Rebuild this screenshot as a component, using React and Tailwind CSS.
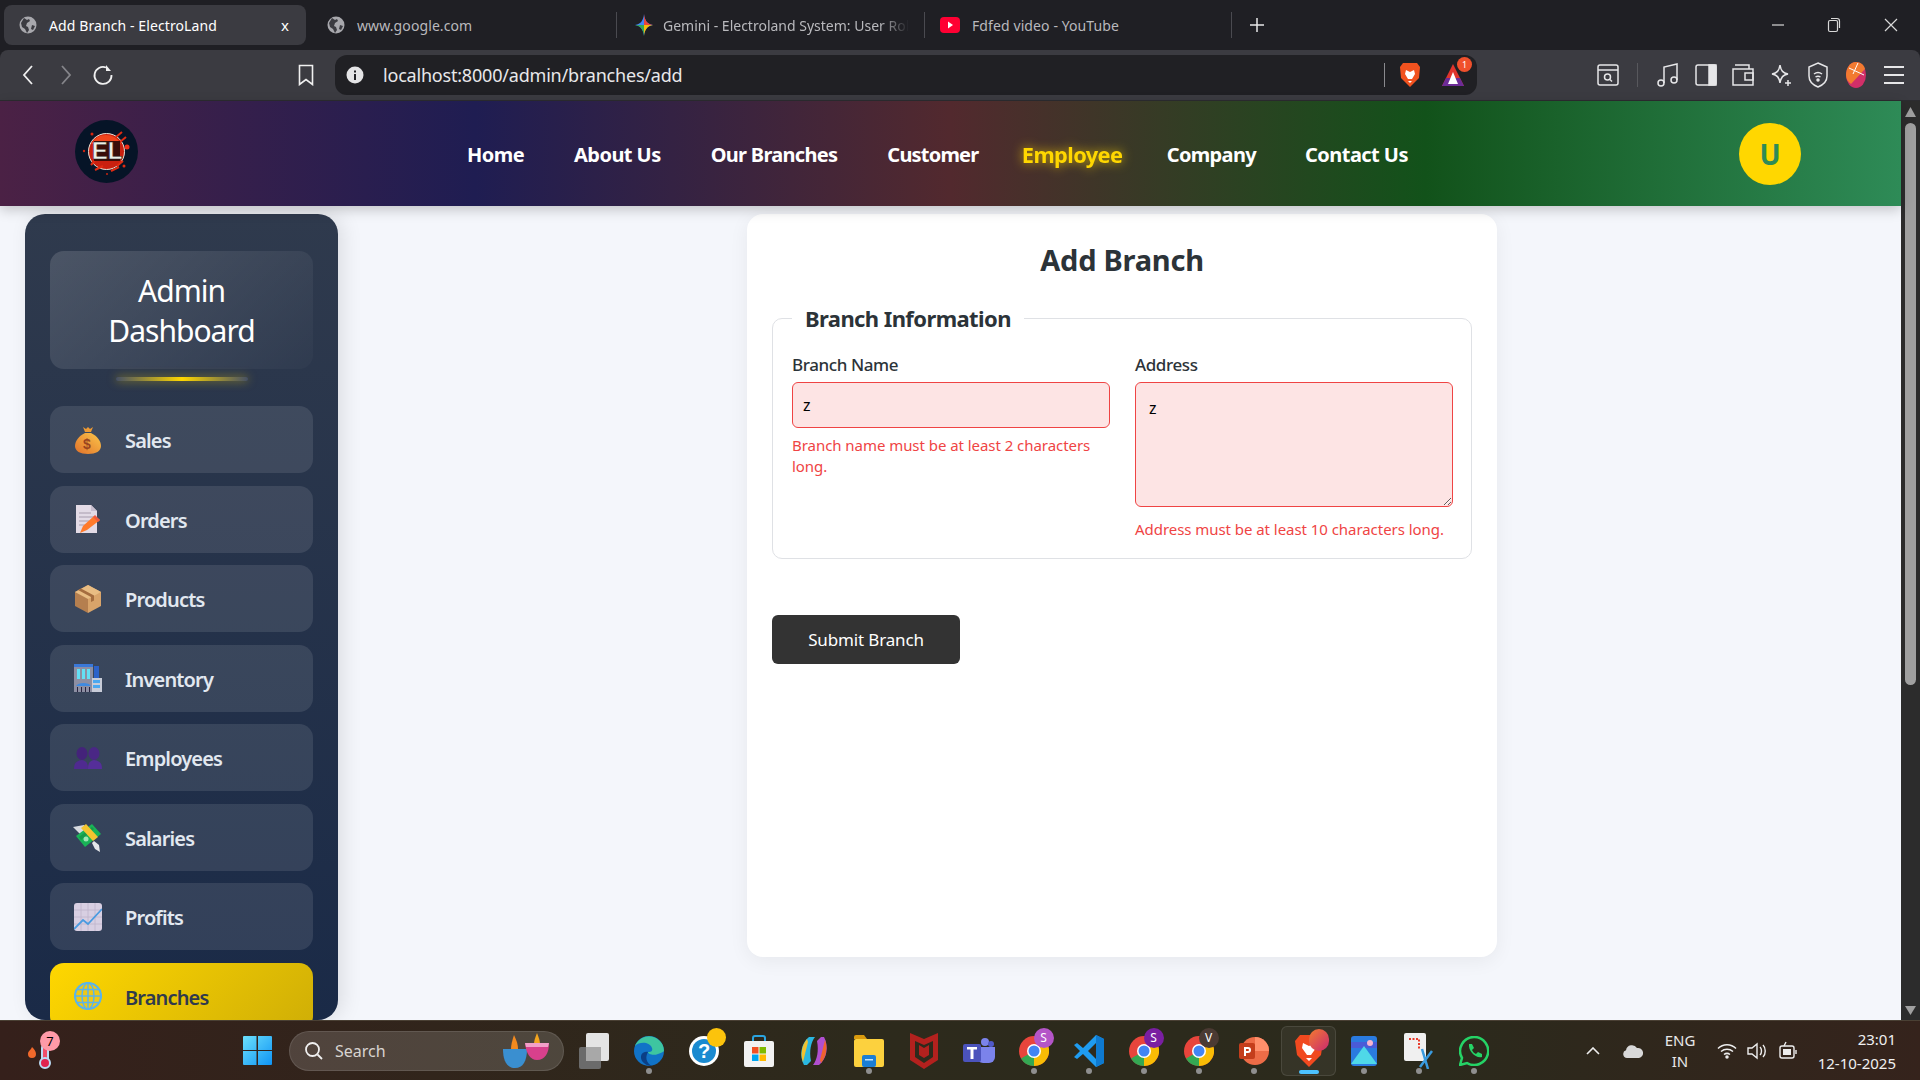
import React from "react";

const Globe = () => (
  <svg width="18" height="18" viewBox="0 0 18 18">
    <circle cx="9" cy="9" r="8.500" fill="#a8a8ad" />
    <path d="M5 2l3 2 2-1 1 2-3 2-1 3 2 1 1 3-2 3-2-4-3-2-1-4zM13 9l3 1-2 4-2-1z" fill="#3b3b41" />
  </svg>
);

const Gemini = () => (
  <svg width="18" height="22" viewBox="0 0 18 22">
    <path d="M9 0C9.500 6 12 10 18 11 12 12 9.500 16 9 22 8.500 16 6 12 0 11 6 10 8.500 6 9 0z" fill="#4285f4" />
    <path d="M9 0C9.500 6 12 10 18 11H9z" fill="#e8453c" />
    <path d="M9 22C9.500 16 12 12 18 11H9z" fill="#f9bc05" />
    <path d="M9 22C8.500 16 6 12 0 11H9z" fill="#34a853" />
  </svg>
);

const Tab = ({ icon, children, active, className, inner, sep }) => (
  <div className={`relative flex items-center h-10 shrink-0 ${className}`}>
    <div className={`flex items-center w-full h-10 rounded-lg ${inner} ${active ? "bg-[#3b3b41] text-white" : "text-[#b9b9bd]"}`}>
      {icon}
      {children}
    </div>
    {sep && <span className="absolute right-0 top-[7px] w-px h-[26px] bg-[#4a4a50]" />}
  </div>
);

const TabStrip = () => (
  <div className="flex items-center h-[50px] pl-1 shrink-0">
    <Tab active className="w-[302px]" inner="pl-[15px] gap-[12px]" icon={<Globe />}>
      <span className="text-[14px] tracking-[0.1px] whitespace-nowrap w-[170px]">Add Branch - ElectroLand</span>
      <span className="ml-[50px] text-[15px] text-white">x</span>
    </Tab>
    <Tab className="w-[311px]" inner="pl-[21px] gap-[12px]" sep icon={<Globe />}>
      <span className="text-[14px] tracking-[0.1px] whitespace-nowrap">www.google.com</span>
    </Tab>
    <Tab className="w-[308px]" inner="pl-[18px] gap-[10px]" sep icon={<Gemini />}>
      <span className="text-[14px] whitespace-nowrap overflow-hidden w-[246px] [mask-image:linear-gradient(90deg,#000_88%,transparent)]">
        Gemini - Electroland System: User Roles
      </span>
    </Tab>
    <Tab
      className="w-[307px]"
      inner="pl-[15px] gap-[12px]"
      sep
      icon={
        <svg width="20" height="16" viewBox="0 0 20 16">
          <rect width="20" height="16" rx="4" fill="#ff0033" />
          <path d="M8 4.500l5 3.500-5 3.500z" fill="#fff" />
        </svg>
      }
    >
      <span className="text-[14px] tracking-[0.1px] whitespace-nowrap">Fdfed video - YouTube</span>
    </Tab>
    <svg className="ml-[17px]" width="16" height="16" viewBox="0 0 16 16" stroke="#e8e8e8" strokeWidth="1.500">
      <path d="M8 1v14M1 8h14" />
    </svg>
    <div className="ml-auto flex items-center text-[#d8d8d8]">
      <svg width="16" height="16" viewBox="0 0 16 16" stroke="currentColor" strokeWidth="1.200"><path d="M2 8h12" /></svg>
      <svg className="ml-[41px]" width="14" height="16" viewBox="0 0 14 16" fill="none" stroke="currentColor" strokeWidth="1.200">
        <rect x="1.500" y="3.500" width="9" height="11" rx="1.500" />
        <path d="M4 1.500h6a2.500 2.500 0 0 1 2.500 2.500v7" />
      </svg>
      <svg className="ml-[42px] mr-[21px]" width="16" height="16" viewBox="0 0 16 16" stroke="currentColor" strokeWidth="1.200">
        <path d="M2 2l12 12M14 2L2 14" />
      </svg>
    </div>
  </div>
);

const tool = "#e6e6e8";

const Toolbar = () => (
  <div className="flex items-center h-[51px] bg-[#3b3b41] rounded-t-lg shrink-0 border-b border-[#2c2c30]">
    <div className="flex items-center w-[335px] shrink-0 pl-[21px]">
      <svg width="14" height="24" viewBox="0 0 14 24" fill="none" stroke="#f0f0f0" strokeWidth="1.800"><path d="M11 3L3 12l8 9" /></svg>
      <svg className="ml-[24px]" width="14" height="24" viewBox="0 0 14 24" fill="none" stroke="#85858a" strokeWidth="1.800"><path d="M3 3l8 9-8 9" /></svg>
      <svg className="ml-[19px]" width="22" height="22" viewBox="0 0 22 22" fill="none" stroke="#f0f0f0" strokeWidth="1.800">
        <path d="M14 3.500A8.500 8.500 0 1 0 19.500 11" />
        <path d="M14 1v6h5" fill="#f0f0f0" stroke="none" />
      </svg>
      <svg className="ml-[184px]" width="16" height="22" viewBox="0 0 16 22" fill="none" stroke="#f0f0f0" strokeWidth="1.600">
        <path d="M1.500 1.500h13v19L8 15.500l-6.500 5z" />
      </svg>
    </div>
    <div className="flex items-center w-[1142px] h-10 bg-[#202024] rounded-xl shrink-0 pl-[11px]">
      <svg width="18" height="18" viewBox="0 0 18 18">
        <circle cx="9" cy="9" r="8.500" fill="#e4e4e6" />
        <rect x="8" y="8" width="2" height="6" fill="#202024" />
        <rect x="8" y="4.500" width="2" height="2" fill="#202024" />
      </svg>
      <span className="ml-[19px] text-[18px] text-[#e8e8ea] tracking-[-0.2px]">localhost:8000/admin/branches/add</span>
      <span className="ml-auto w-px h-[24px] bg-[#8a8a8e]" />
      <svg className="ml-[14px]" width="22" height="26" viewBox="0 0 22 26">
        <path d="M4 1h14l3 4-1 11-9 9-9-9L1 5z" fill="#f1521f" />
        <path d="M7 8l4 2 4-2 1 4-3 5h-4l-3-5zM9 19h4l-2 2z" fill="#fff" />
      </svg>
      <div className="relative ml-[20px] mr-[12px]">
        <svg width="24" height="24" viewBox="0 0 24 24">
          <path d="M12 1L1 23h22z" fill="#e0342d" />
          <path d="M1 23h22l-4-8H5z" fill="#6c2b97" />
          <path d="M12 9l-5 12h10z" fill="#fff" />
        </svg>
        <span className="absolute -top-[6px] -right-[7px] w-[15px] h-[15px] rounded-full bg-[#f0502c] text-white text-[9px] leading-[15px] text-center">1</span>
      </div>
    </div>
    <div className="flex items-center ml-[120px]">
      <svg width="22" height="24" viewBox="0 0 22 24" fill="none" stroke={tool} strokeWidth="1.500">
        <rect x="1" y="2" width="20" height="20" rx="2" />
        <path d="M1 7h20" />
        <circle cx="10.500" cy="14" r="3" />
        <path d="M13 16.500l2 2" />
      </svg>
      <span className="ml-[18px] w-px h-[24px] bg-[#58585d]" />
      <svg className="ml-[18px]" width="24" height="26" viewBox="0 0 24 26" fill="none" stroke={tool} strokeWidth="1.500">
        <circle cx="5" cy="21" r="3" />
        <circle cx="18" cy="18" r="3" />
        <path d="M8 21V5l13-3v16" />
      </svg>
      <svg className="ml-[15px]" width="22" height="22" viewBox="0 0 22 22" fill="none" stroke={tool} strokeWidth="1.500">
        <rect x="1" y="1" width="20" height="20" rx="2" />
        <rect x="14" y="1" width="7" height="20" fill={tool} />
      </svg>
      <svg className="ml-[15px]" width="22" height="22" viewBox="0 0 22 22" fill="none" stroke={tool} strokeWidth="1.500">
        <path d="M3 1h14v4M1 5h20v16H1z" />
        <rect x="13" y="9" width="8" height="7" />
      </svg>
      <svg className="ml-[16px]" width="22" height="24" viewBox="0 0 22 24" fill="none" stroke={tool} strokeWidth="1.500">
        <path d="M10 2c1 6 3 8 8 9-5 1-7 3-8 9-1-6-3-8-8-9 5-1 7-3 8-9z" />
        <path d="M18 17v6M15 20h6" />
      </svg>
      <svg className="ml-[16px]" width="20" height="26" viewBox="0 0 20 26" fill="none" stroke={tool} strokeWidth="1.500">
        <path d="M10 1l9 4v9c0 5-4 9-9 11-5-2-9-6-9-11V5z" />
        <path d="M6 12c2.500-2 5.500-2 8 0M7.500 15c1.500-1 3.500-1 5 0" />
        <circle cx="10" cy="18" r="1" fill={tool} />
      </svg>
      <svg className="ml-[18px]" width="20" height="26" viewBox="0 0 20 26">
        <ellipse cx="10" cy="13" rx="10" ry="13" fill="#d12f68" />
        <path d="M0 13C0 6 4 0 10 0c5 0 8 3 9 7L5 22C2 20 0 17 0 13z" fill="#f27a30" />
        <path d="M3 6l15 7M12 1L7 12" stroke="#fff" strokeWidth="1" />
      </svg>
      <svg className="ml-[17px]" width="22" height="22" viewBox="0 0 22 22" stroke={tool} strokeWidth="1.800">
        <path d="M1 3h20M1 11h20M1 19h20" />
      </svg>
    </div>
  </div>
);

const Logo = () => (
  <svg width="63" height="63" viewBox="0 0 63 63" className="shrink-0">
    <circle cx="31.500" cy="31.500" r="31.500" fill="#061427" />
    <circle cx="31.500" cy="31.500" r="18" fill="#c9200f" stroke="#e8e4d8" strokeWidth="1" />
    <path d="M16 24a17 17 0 0 1 30 0z" fill="#f0451c" />
    <path d="M41 17l6 -5M45 22l6-5M16 45l5-6M42 46l6-5M20 50l8-4M36 51l8-4" stroke="#e02c12" strokeWidth="2" />
    <circle cx="52" cy="27" r="2.500" fill="#ef2f1a" />
    <circle cx="17" cy="14" r="1.500" fill="#d5260f" />
    <circle cx="9" cy="31" r="1.200" fill="#c92410" />
    <circle cx="49" cy="46" r="1.500" fill="#e02c12" />
    <circle cx="32" cy="54" r="1" fill="#c92410" />
    <rect x="19" y="21" width="26" height="20" fill="#3a0d08" />
    <text x="32" y="39" textAnchor="middle" fontSize="24" fontWeight="700" fill="#eef0e6" stroke="#1b2326" strokeWidth="0.500" fontFamily="Liberation Sans, sans-serif">EL</text>
  </svg>
);

const NavLink = ({ children, className }) => (
  <a className={`text-[20px] font-bold whitespace-nowrap ${className}`}>{children}</a>
);

const Header = () => (
  <header className="relative z-10 flex items-center h-[105px] shrink-0 pl-[75px] bg-[linear-gradient(90deg,#4b2145_0%,#1f1d52_25%,#52292e_50%,#12521a_75%,#2e8b57_100%)] shadow-[0_4px_12px_rgba(0,0,0,0.2)]">
    <div className="-mt-[5px]">
      <Logo />
    </div>
    <nav className="flex items-center gap-[50px] ml-[329px] mt-[2px] text-white">
      <NavLink className="tracking-[-0.55px]">Home</NavLink>
      <NavLink className="tracking-[-0.55px]">About Us</NavLink>
      <NavLink className="tracking-[-0.7px]">Our Branches</NavLink>
      <NavLink className="tracking-[-0.8px]">Customer</NavLink>
      <NavLink className="tracking-[-0.55px] -ml-[2px] -mr-[2px] text-[#ffd700] scale-[1.09] [text-shadow:0_0_10px_rgba(255,215,0,0.8)]">Employee</NavLink>
      <NavLink className="tracking-[-0.65px]">Company</NavLink>
      <NavLink className="tracking-[-0.55px] -ml-[1px]">Contact Us</NavLink>
    </nav>
    <div className="ml-auto mr-[100px] flex items-center justify-center w-[62px] h-[62px] rounded-full bg-[#ffd700] text-[#2e8b57] text-[28px] font-bold">
      U
    </div>
  </header>
);

const icons = {
  Sales: (
    <svg width="26" height="28" viewBox="0 0 26 28">
      <defs>
        <linearGradient id="bag" x1="0" y1="1" x2="1" y2="0">
          <stop offset="0" stopColor="#e0702a" />
          <stop offset="1" stopColor="#fbc64a" />
        </linearGradient>
      </defs>
      <path d="M8 1l3 2 2-2 2 2 3-2-2 5h-6z" fill="#ee9a33" />
      <path d="M10 7h6c6 3 10 8 10 13 0 5-5 8-13 8S0 25 0 20C0 15 4 10 10 7z" fill="url(#bag)" />
      <text x="12" y="23" fontSize="14" fontWeight="700" textAnchor="middle" fill="#9a4420" fontFamily="Liberation Sans">$</text>
    </svg>
  ),
  Orders: (
    <svg width="26" height="28" viewBox="0 0 26 28">
      <path d="M1 0h15l6 6v22H1z" fill="#e3dbe6" />
      <path d="M16 0l6 6h-6z" fill="#c9bfd0" />
      <path d="M4 8h12M4 12h14M4 16h10M4 20h7" stroke="#a79cad" strokeWidth="1" />
      <path d="M5 28l3-7 11-10 6 4-13 10z" fill="#ff7a2b" />
      <path d="M20 10l5 5-2 2-5-5z" fill="#f15a3f" />
    </svg>
  ),
  Products: (
    <svg width="26" height="28" viewBox="0 0 26 28">
      <path d="M13 0l13 7v14l-13 7z" fill="#d9a46a" />
      <path d="M13 0L0 7v14l13 7z" fill="#b57f4f" />
      <path d="M0 7l13 7 13-7-13-7z" fill="#e9bd83" />
      <path d="M6 3.500l13 7v5l-3 1.500v-5L3 5z" fill="#a56d3f" />
    </svg>
  ),
  Inventory: (
    <svg width="28" height="28" viewBox="0 0 28 28">
      <rect x="0" y="0" width="19" height="28" fill="#8d8fa3" />
      <rect x="0" y="0" width="19" height="3" fill="#3a78d8" />
      <path d="M3 5h3v10H3zM8 5h3v10H8zM13 5h3v10h-3z" fill="#63e0f5" />
      <rect x="20" y="2" width="5" height="13" fill="#2c62c9" />
      <rect x="18" y="14" width="10" height="14" fill="#c8ccd8" />
      <path d="M19 16h7v3h-7zM19 21h7v3h-7z" fill="#4aa8f0" />
      <path d="M2 22c2-4 13-4 15 0z" fill="#3f8ae0" />
      <path d="M3 23h1v5H3zM7 23h1v5H7zM11 23h1v5h-1zM15 23h1v5h-1z" fill="#2a2540" />
    </svg>
  ),
  Employees: (
    <svg width="28" height="22" viewBox="0 0 28 22">
      <ellipse cx="8" cy="6.500" rx="5.500" ry="6.500" fill="#44237a" />
      <ellipse cx="20" cy="6.500" rx="5.500" ry="6.500" fill="#4a2785" />
      <path d="M0 22c0-6 2-8 8-9 5 1 6 4 6 9z" fill="#4f2a90" />
      <path d="M14 22c0-5 1-8 6-9 6 1 8 3 8 9z" fill="#552e99" />
    </svg>
  ),
  Salaries: (
    <svg width="30" height="30" viewBox="0 0 30 30">
      <path d="M0 5l11-2 3 6-7 3z" fill="#d8dbe0" />
      <path d="M21 19l5 4 1 7-5-3-3-6z" fill="#e4e6ea" />
      <path d="M3 14L19 2l9 10-16 13z" fill="#19b357" />
      <path d="M6 15l13-10 2 2-13 11z" fill="#169a4a" />
      <path d="M8 6l5-4 12 13-5 4z" fill="#f4c430" />
      <circle cx="13" cy="17" r="2.500" fill="#9ee6b5" />
    </svg>
  ),
  Profits: (
    <svg width="28" height="28" viewBox="0 0 28 28">
      <rect width="28" height="28" rx="3" fill="#d8cfe2" />
      <path d="M7 0v28M14 0v28M21 0v28M0 7h28M0 14h28M0 21h28" stroke="#bfb4cc" strokeWidth="0.800" />
      <path d="M0 26l9-9 5 4L28 6" fill="none" stroke="#4a9be0" strokeWidth="1.800" />
    </svg>
  ),
  Branches: (
    <svg width="28" height="28" viewBox="0 0 28 28" fill="none" stroke="#5ab4ea" strokeWidth="1.500">
      <circle cx="14" cy="14" r="13" strokeWidth="2.200" fill="#f0c814" />
      <ellipse cx="14" cy="14" rx="6" ry="13" />
      <path d="M14 1v26M1 14h26M3 7.500h22M3 20.500h22" />
    </svg>
  ),
};

const items = ["Sales", "Orders", "Products", "Inventory", "Employees", "Salaries", "Profits", "Branches"];

const SideItem = ({ label }) => {
  const active = label === "Branches";
  return (
    <div
      className={`flex items-center shrink-0 h-[67px] rounded-[14px] ${
        active ? "bg-[linear-gradient(135deg,#ffd700,#cfae06)] text-[#2f3a4d]" : "bg-white/10 text-[#e2e8f0]"
      }`}
    >
      <span className="flex items-center justify-center w-[75px] pl-[1px] shrink-0">{icons[label]}</span>
      <span className="text-[20px] font-semibold tracking-[-0.85px] pt-[3px]">{label}</span>
    </div>
  );
};

const Sidebar = () => (
  <aside className="flex flex-col w-[313px] h-[806px] shrink-0 overflow-hidden rounded-[20px] px-[25px] pt-[37px] bg-[linear-gradient(180deg,#2f3a4d,#1a2a47)] shadow-[5px_0_20px_rgba(0,0,0,0.1)]">
    <div className="flex items-center justify-center h-[118px] shrink-0 rounded-[14px] bg-[linear-gradient(135deg,rgba(255,255,255,0.14),rgba(255,255,255,0.02))] text-white text-[30px] leading-[40px] text-center tracking-[-1px] px-[40px] pt-[2px]">
      Admin Dashboard
    </div>
    <div className="self-center mt-[8px] mb-[25px] w-[132px] h-[4px] shrink-0 rounded-full bg-[linear-gradient(90deg,#465064,#ffd700,#465064)] shadow-[0_0_10px_rgba(255,215,0,0.5)]" />
    <div className="flex flex-col gap-[12.500px]">
      {items.map((label) => (
        <SideItem key={label} label={label} />
      ))}
    </div>
  </aside>
);

const Field = ({ label, error, children, errorClass }) => (
  <div className="flex flex-col min-w-0">
    <label className="text-[17px] leading-[23px] font-medium text-[#2c3338] tracking-[-0.4px] mb-[6px]">{label}</label>
    {children}
    <p className={`text-[15px] leading-[21px] text-[#ef4444] tracking-[-0.05px] ${errorClass}`}>{error}</p>
  </div>
);

const Form = () => (
  <section className="flex flex-col w-[750px] h-[743px] shrink-0 ml-[409px] rounded-[16px] bg-white px-[25px] pt-[25px] shadow-[0_4px_20px_rgba(0,0,0,0.06)]">
    <h1 className="text-center text-[29px] leading-[42px] font-bold text-[#2c3338] tracking-[-0.25px]">Add Branch</h1>
    <fieldset className="mt-[22px] h-[256px] rounded-[10px] border border-[#dfe1e5] pl-[19px] pr-[18px] pt-[20px]">
      <legend className="px-[13px] text-[22px] leading-[30px] font-bold text-[#2c3338] tracking-[-0.6px]">
        Branch Information
      </legend>
      <div className="grid grid-cols-[318px_318px] gap-[25px]">
        <Field label="Branch Name" error="Branch name must be at least 2 characters long." errorClass="mt-[7px]">
          <input
            readOnly
            value="z"
            className="w-full h-[46px] rounded-[6px] border border-[#ef4444] bg-[#fde4e4] px-[10px] text-[16px] text-black outline-none"
          />
        </Field>
        <Field label="Address" error="Address must be at least 10 characters long." errorClass="mt-[12px]">
          <textarea
            readOnly
            value="z"
            className="block w-full h-[125px] rounded-[6px] border border-[#ef4444] bg-[#fde4e4] px-[13px] py-[14px] text-[16px] leading-[22px] text-black outline-none"
          />
        </Field>
      </div>
    </fieldset>
    <button className="mt-[56px] w-[188px] h-[49px] rounded-[6px] bg-[#333333] text-white text-[17px] tracking-[-0.15px]">
      Submit Branch
    </button>
  </section>
);

const Scrollbar = () => (
  <div className="relative w-[19px] shrink-0 bg-[#2c2c2c]">
    <svg className="absolute left-[4px] top-[6px]" width="11" height="10" viewBox="0 0 11 10"><path d="M5.500 0L11 10H0z" fill="#a0a0a0" /></svg>
    <div className="absolute left-[4px] top-[22px] w-[11px] h-[562px] rounded-full bg-[#a0a0a0]" />
    <svg className="absolute left-[4px] bottom-[5px]" width="11" height="9" viewBox="0 0 11 9"><path d="M5.500 9L11 0H0z" fill="#a0a0a0" /></svg>
  </div>
);

const Tb = ({ children, dot, active }) => (
  <div className={`relative flex items-center justify-center w-[55px] h-[50px] shrink-0 rounded-md ${active ? "bg-white/5 border border-white/10" : ""}`}>
    {children}
    {dot && <span className="absolute bottom-[1px] left-1/2 -ml-[4px] w-[8px] h-[8px] rounded-full bg-[#8f8f8f] scale-75" />}
    {active && <span className="absolute bottom-[1px] left-1/2 -ml-[10px] w-[20px] h-[4px] rounded-full bg-[#4cc2ff]" />}
  </div>
);

const Chrome = ({ badge, color }) => (
  <div className="relative w-[30px] h-[30px]">
    <svg width="30" height="30" viewBox="0 0 30 30">
      <circle cx="15" cy="15" r="15" fill="#e8453c" />
      <path d="M15 15L2 22.500A15 15 0 0 0 15 30z" fill="#34a853" />
      <path d="M15 15l0 15A15 15 0 0 0 28 7.500z" fill="#f9bc05" />
      <circle cx="15" cy="15" r="7" fill="#fff" />
      <circle cx="15" cy="15" r="5.500" fill="#4285f4" />
    </svg>
    <span className={`absolute -top-[8px] -right-[5px] w-[20px] h-[20px] rounded-full text-[12px] leading-[20px] text-center text-white ${color}`}>
      {badge}
    </span>
  </div>
);

const Taskbar = () => (
  <div className="flex items-center h-[60px] shrink-0 border-t border-[#4a4034] bg-[linear-gradient(90deg,#35201b,#2d2a1c_45%,#2b2a1c_75%,#35231c)] text-white">
    <div className="relative ml-[27px] w-[32px] h-[36px] shrink-0">
      <svg className="absolute left-0 top-[10px]" width="32" height="26" viewBox="0 0 32 26">
        <path d="M5 4c2 2 4 4 4 7a4 4 0 0 1-8 0c0-3 3-4 4-7z" fill="#f2692b" />
        <rect x="15" y="2" width="6" height="18" rx="3" fill="#f04f6a" stroke="#bcdcf5" strokeWidth="2" />
        <circle cx="18" cy="20" r="5" fill="#e0234f" stroke="#bcdcf5" strokeWidth="2" />
      </svg>
      <span className="absolute left-[13px] -top-[2px] w-[20px] h-[20px] rounded-full bg-[#ff9aa8] text-black text-[13px] leading-[20px] text-center">7</span>
    </div>
    <svg className="ml-[184px] shrink-0" width="29" height="29" viewBox="0 0 29 29">
      <defs>
        <linearGradient id="win" x1="0" y1="0" x2="1" y2="1">
          <stop offset="0" stopColor="#6ce0fb" />
          <stop offset="1" stopColor="#0f94f5" />
        </linearGradient>
      </defs>
      <path d="M0 1a1 1 0 0 1 1-1h12.500v14H0zM15 0h13a1 1 0 0 1 1 1v13H15zM0 15h13.500v14H1a1 1 0 0 1-1-1zM15 15h14v13a1 1 0 0 1-1 1H15z" fill="url(#win)" />
    </svg>
    <div className="flex items-center ml-[17px] w-[275px] h-10 shrink-0 rounded-full bg-white/15 border border-white/10 pl-[14px]">
      <svg width="20" height="20" viewBox="0 0 20 20" fill="none" stroke="#f0f0f0" strokeWidth="1.800">
        <circle cx="8.500" cy="8.500" r="6.500" />
        <path d="M13.500 13.500L18 18" />
      </svg>
      <span className="ml-[11px] text-[16px] text-[#d8d4d0]">Search</span>
      <svg className="ml-[114px]" width="50" height="38" viewBox="0 0 50 38">
        <path d="M14 3c3 6 4 10 4 14h-7c0-4 1-8 3-14z" fill="#f28a1f" />
        <path d="M3 17h24c0 12-4 19-12 19S3 29 3 17z" fill="#3a8fd0" />
        <path d="M37 1c2 5 3 8 3 11h-6c0-3 1-6 3-11z" fill="#f2a51f" />
        <path d="M25 11h24c0 10-4 17-12 17-7 0-11-7-12-17z" fill="#d8408c" />
        <path d="M25 11h24l-1 4H26z" fill="#f2a0c8" />
      </svg>
    </div>
    <div className="flex items-center ml-[2px]">
      <Tb>
        <svg width="30" height="36" viewBox="0 0 30 36">
          <rect x="0" y="14" width="22" height="22" rx="2" fill="#6b6b6b" />
          <rect x="7" y="0" width="23" height="28" rx="2" fill="#e4e4e4" />
          <rect x="7" y="14" width="15" height="14" fill="#a8a8a8" />
        </svg>
      </Tb>
      <Tb dot>
        <svg width="30" height="30" viewBox="0 0 30 30">
          <circle cx="15" cy="15" r="15" fill="#1173c7" />
          <path d="M30 15A15 15 0 0 0 1 10c4-4 14-5 17 2 1 3-1 4-4 4 0 2 5 4 10 2 3-1 5-2 6-3z" fill="#3ec5a0" />
          <path d="M14 16c-5-1-9 3-6 9 2 3 6 5 10 5-6-3-7-9-4-14z" fill="#0b3f85" />
        </svg>
      </Tb>
      <Tb>
        <div className="relative">
          <svg width="30" height="30" viewBox="0 0 30 30">
            <circle cx="15" cy="15" r="15" fill="#fff" />
            <circle cx="15" cy="15" r="12" fill="#1a8ad0" />
            <text x="15" y="22" fontSize="20" fontWeight="700" textAnchor="middle" fill="#fff" fontFamily="Liberation Sans">?</text>
          </svg>
          <span className="absolute -top-[8px] -right-[7px] w-[19px] h-[19px] rounded-full bg-[#fcc30c]" />
        </div>
      </Tb>
      <Tb>
        <svg width="30" height="32" viewBox="0 0 30 32">
          <path d="M9 8V3a2 2 0 0 1 2-2h8a2 2 0 0 1 2 2v5" fill="none" stroke="#2aa4e0" strokeWidth="2" />
          <rect y="6" width="30" height="26" rx="2" fill="#f2f2f2" />
          <rect x="8" y="12" width="6.500" height="6.500" fill="#f25022" />
          <rect x="15.500" y="12" width="6.500" height="6.500" fill="#7fba00" />
          <rect x="8" y="19.500" width="6.500" height="6.500" fill="#00a4ef" />
          <rect x="15.500" y="19.500" width="6.500" height="6.500" fill="#ffb900" />
        </svg>
      </Tb>
      <Tb>
        <svg width="30" height="30" viewBox="0 0 30 30">
          <path d="M10 1h6c-4 5-6 14-4 24l-4 4H5c-5-9-3-22 5-28z" fill="#2ab7e0" />
          <path d="M8 3c-5 6-7 15-4 23l5-20z" fill="#f2c230" />
          <path d="M20 29h-6c4-5 6-14 4-24l4-4h3c5 9 3 22-5 28z" fill="#b04fd0" />
          <path d="M22 27c5-6 7-15 4-23l-5 20z" fill="#f0632f" />
        </svg>
      </Tb>
      <Tb dot>
        <svg width="30" height="32" viewBox="0 0 30 32">
          <path d="M0 2a2 2 0 0 1 2-2h8l3 4h-13z" fill="#d99a0e" />
          <rect y="4" width="30" height="28" rx="2" fill="#fcd13e" />
          <rect x="8" y="20" width="14" height="12" rx="2" fill="#1a7ed4" />
          <rect x="11" y="24" width="8" height="1.500" fill="#bfe3ff" />
        </svg>
      </Tb>
      <Tb>
        <svg width="28" height="36" viewBox="0 0 28 36">
          <path d="M0 0l14 6 14-6v27l-14 9-14-9z" fill="#b3211e" />
          <path d="M5 8l9 4 9-4v16l-9 6-9-6z" fill="#2e2a1c" />
          <path d="M9 12l5 3 5-3v10l-5 3-5-3z" fill="#b3211e" />
        </svg>
      </Tb>
      <Tb>
        <svg width="32" height="30" viewBox="0 0 32 30">
          <circle cx="22" cy="6" r="4" fill="#7b83eb" />
          <circle cx="28" cy="8" r="3" fill="#5059c9" />
          <path d="M14 11h18v10a6 6 0 0 1-6 6h-6a6 6 0 0 1-6-6z" fill="#7b83eb" />
          <rect x="0" y="8" width="18" height="18" rx="2" fill="#4b53bc" />
          <path d="M4 11h10v2.500h-3.500V23h-3v-9.500H4z" fill="#fff" />
        </svg>
      </Tb>
      <Tb dot>
        <Chrome badge="S" color="bg-[#b455c8]" />
      </Tb>
      <Tb dot>
        <svg width="30" height="32" viewBox="0 0 30 32">
          <path d="M22 0l8 4v24l-8 4L9 19l-6 5-3-2 6-6-6-6 3-2 6 5z" fill="#1f9cf0" />
          <path d="M22 8l-8 8 8 8z" fill="#2f2b1d" />
          <path d="M22 0l8 4v24l-8 4z" fill="#0e7ad0" />
        </svg>
      </Tb>
      <Tb dot>
        <Chrome badge="S" color="bg-[#7a1fa2]" />
      </Tb>
      <Tb dot>
        <Chrome badge="V" color="bg-[#4b3a33]" />
      </Tb>
      <Tb dot>
        <svg width="30" height="30" viewBox="0 0 30 30">
          <circle cx="16" cy="15" r="14" fill="#ed6c47" />
          <path d="M16 1a14 14 0 0 1 14 14H16z" fill="#ff8f6b" />
          <rect y="7" width="16" height="16" rx="2" fill="#c43e1c" />
          <path d="M5 11h4a3 3 0 0 1 0 6H7v3H5zM7 13v2h2a1 1 0 0 0 0-2z" fill="#fff" />
        </svg>
      </Tb>
      <Tb active>
        <div className="relative">
          <svg width="28" height="32" viewBox="0 0 28 32">
            <path d="M5 0h18l5 6-2 14-12 12L2 20 0 6z" fill="#f1491f" />
            <path d="M8 8l6 3 6-3 1 5-5 7h-4l-5-7zM11 23h6l-3 3z" fill="#fff" />
          </svg>
          <span className="absolute -top-[6px] -right-[6px] w-[20px] h-[22px] rounded-full bg-[linear-gradient(135deg,#f47a30,#c92a70)]" />
        </div>
      </Tb>
      <Tb dot>
        <svg width="26" height="30" viewBox="0 0 26 30">
          <rect width="26" height="30" rx="3" fill="#2a7be0" />
          <path d="M0 6h26v6H0z" fill="#4a5bd8" />
          <path d="M0 28l13-18 13 18z" fill="#4fd8e8" />
          <circle cx="19" cy="7" r="3" fill="#f7b5d0" />
        </svg>
      </Tb>
      <Tb dot>
        <svg width="30" height="36" viewBox="0 0 30 36">
          <rect width="22" height="28" rx="2" fill="#f0f0f0" />
          <path d="M5 6h10v10" fill="none" stroke="#e83a2a" strokeWidth="2" strokeDasharray="2 1.500" />
          <path d="M18 16l6 20M28 18l-12 16" stroke="#3a9be0" strokeWidth="2.500" />
        </svg>
      </Tb>
      <Tb dot>
        <svg width="30" height="30" viewBox="0 0 30 30">
          <path d="M15 1a14 14 0 0 0-12 21L1 29l7-2A14 14 0 1 0 15 1z" fill="none" stroke="#25d366" strokeWidth="2.500" />
          <path d="M10 8l3 0 2 4-2 2c1 2 2 3 4 4l2-2 4 2v3c-6 2-14-6-13-13z" fill="#25d366" />
        </svg>
      </Tb>
    </div>
    <svg className="ml-[85px] shrink-0" width="14" height="8" viewBox="0 0 14 8" fill="none" stroke="#eee" strokeWidth="1.600"><path d="M1 7l6-6 6 6" /></svg>
    <svg className="ml-[23px] shrink-0" width="20" height="14" viewBox="0 0 20 14"><path d="M4 14a4 4 0 0 1-1-7.800A6 6 0 0 1 14 4a5 5 0 0 1 2 10z" fill="#d8d8d8" /></svg>
    <div className="ml-[20px] w-[34px] text-center text-[15px] leading-[21px] text-[#e8e8e8] shrink-0">ENG<br />IN</div>
    <svg className="ml-[20px] shrink-0" width="20" height="16" viewBox="0 0 20 16" fill="none" stroke="#eee" strokeWidth="1.500">
      <path d="M1 5.500c5-5 13-5 18 0M4 8.500c3.500-3 8.500-3 12 0M7 11.500c2-1.500 4-1.500 6 0" />
      <circle cx="10" cy="14" r="1" fill="#eee" />
    </svg>
    <svg className="ml-[10px] shrink-0" width="22" height="18" viewBox="0 0 22 18" fill="none" stroke="#eee" strokeWidth="1.400">
      <path d="M1 6h4l5-4v14l-5-4H1z" />
      <path d="M13 5c2 2 2 6 0 8M16 3c3 3 3 9 0 12" />
    </svg>
    <svg className="ml-[9px] shrink-0" width="20" height="20" viewBox="0 0 20 20" fill="none" stroke="#eee" strokeWidth="1.400">
      <rect x="2" y="5" width="14" height="12" rx="2" />
      <rect x="5" y="8" width="8" height="6" fill="#eee" stroke="none" />
      <path d="M18 9v4M8 1L6 5" />
    </svg>
    <div className="ml-auto mr-[24px] text-right text-[15px] leading-[24px] text-[#f0f0f0] shrink-0">
      <div>23:01</div>
      <div>12-10-2025</div>
    </div>
  </div>
);

export default function App() {
  return (
    <div className="flex flex-col w-screen h-screen overflow-hidden bg-[#1f1f24] font-['Noto_Sans',sans-serif]">
      <TabStrip />
      <Toolbar />
      <div className="flex flex-1 min-h-0">
        <div className="flex flex-col flex-1 min-w-0 bg-[#f4f6fb]">
          <Header />
          <div className="flex items-start flex-1 min-h-0 pl-[25px] pt-[8px]">
            <Sidebar />
            <Form />
          </div>
        </div>
        <Scrollbar />
      </div>
      <Taskbar />
    </div>
  );
}
